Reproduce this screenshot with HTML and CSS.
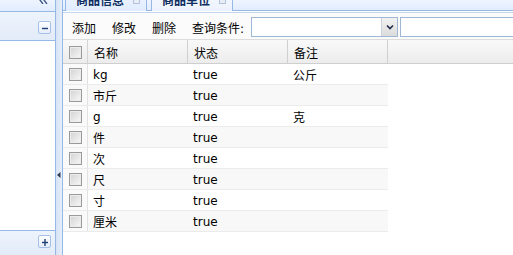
FILE: index.html
```html
<!DOCTYPE html>
<html lang="zh">
<head>
<meta charset="utf-8">
<title>商品单位</title>
<link rel="stylesheet" href="styles.css">
</head>
<body>
<div class="app">
  <aside class="west">
    <div class="west-title">
      <span class="tool-collapse">
        <svg width="10" height="10" viewBox="0 0 10 10"><polyline points="5,0 2,4 5,8" fill="none" stroke="#3d5a86" stroke-width="1.4"/><polyline points="9,0 6,4 9,8" fill="none" stroke="#3d5a86" stroke-width="1.4"/></svg>
      </span>
    </div>
    <div class="acc-header acc-top">
      <span class="acc-tool"><svg width="8" height="8" viewBox="0 0 8 8"><line x1="1" y1="4.5" x2="7" y2="4.5" stroke="#1d3f73" stroke-width="1.4"/></svg></span>
    </div>
    <div class="acc-body"></div>
    <div class="acc-header acc-bottom">
      <span class="acc-tool"><svg width="8" height="8" viewBox="0 0 8 8"><line x1="1" y1="4.5" x2="7" y2="4.5" stroke="#1d3f73" stroke-width="1.4"/><line x1="4" y1="1" x2="4" y2="8" stroke="#1d3f73" stroke-width="1.4"/></svg></span>
    </div>
  </aside>
  <div class="splitter">
    <svg class="split-arrow" width="4" height="6" viewBox="0 0 4 6"><polygon points="3.5,0 0,3 3.5,6" fill="#2a3a55"/></svg>
  </div>
  <main class="center">
    <div class="tabs">
      <div class="tab">商品信息<span class="tab-close"></span></div>
      <div class="tab tab-sel">商品单位<span class="tab-close"></span></div>
    </div>
    <div class="toolbar">
      <span class="tb-btn">添加</span>
      <span class="tb-btn">修改</span>
      <span class="tb-btn">删除</span>
      <span class="tb-label">查询条件:</span>
      <span class="combo">
        <span class="combo-text"></span>
        <span class="combo-arrow"><svg width="8" height="6" viewBox="0 0 8 6"><polyline points="1,1.5 4,4.5 7,1.5" fill="none" stroke="#1f2d4a" stroke-width="1.6"/></svg></span>
      </span>
      <span class="search-box"></span>
    </div>
    <div class="grid">
      <div class="grid-header">
        <div class="cell cell-ck"><span class="ck"></span></div>
        <div class="cell cell-col">名称</div>
        <div class="cell cell-col">状态</div>
        <div class="cell cell-col">备注</div>
        <div class="cell cell-fill"></div>
      </div>
      <div class="grid-body">
        <div class="row"><div class="cell cell-ck"><span class="ck"></span></div><div class="cell cell-col">kg</div><div class="cell cell-col">true</div><div class="cell cell-col">公斤</div></div>
        <div class="row row-alt"><div class="cell cell-ck"><span class="ck"></span></div><div class="cell cell-col">市斤</div><div class="cell cell-col">true</div><div class="cell cell-col"></div></div>
        <div class="row"><div class="cell cell-ck"><span class="ck"></span></div><div class="cell cell-col">g</div><div class="cell cell-col">true</div><div class="cell cell-col">克</div></div>
        <div class="row row-alt"><div class="cell cell-ck"><span class="ck"></span></div><div class="cell cell-col">件</div><div class="cell cell-col">true</div><div class="cell cell-col"></div></div>
        <div class="row"><div class="cell cell-ck"><span class="ck"></span></div><div class="cell cell-col">次</div><div class="cell cell-col">true</div><div class="cell cell-col"></div></div>
        <div class="row row-alt"><div class="cell cell-ck"><span class="ck"></span></div><div class="cell cell-col">尺</div><div class="cell cell-col">true</div><div class="cell cell-col"></div></div>
        <div class="row"><div class="cell cell-ck"><span class="ck"></span></div><div class="cell cell-col">寸</div><div class="cell cell-col">true</div><div class="cell cell-col"></div></div>
        <div class="row row-alt"><div class="cell cell-ck"><span class="ck"></span></div><div class="cell cell-col">厘米</div><div class="cell cell-col">true</div><div class="cell cell-col"></div></div>
      </div>
    </div>
  </main>
</div>
</body>
</html>
```
FILE: styles.css
```css
* { box-sizing: border-box; }
html, body {
  margin: 0;
  width: 513px;
  height: 255px;
  overflow: hidden;
  background: #fff;
}
body {
  font-family: "DejaVu Sans", "Noto Sans CJK SC", sans-serif;
  font-size: 12px;
  color: #000;
}
.app {
  display: flex;
  height: 255px;
}

/* west region */
.west {
  width: 56px;
  flex: none;
  display: flex;
  flex-direction: column;
  border-right: 1px solid #95b8e7;
  background: #fff;
}
.west-title {
  height: 12px;
  flex: none;
  border-bottom: 1px solid #95b8e7;
  background: linear-gradient(#eff5ff, #e0ecff);
  display: flex;
  justify-content: flex-end;
  align-items: flex-start;
  padding-right: 4px;
  overflow: hidden;
}
.tool-collapse {
  display: block;
  width: 11px;
  height: 4px;
  overflow: hidden;
  margin-right: 2px;
}
.tool-collapse svg {
  display: block;
  margin-top: -4px;
}
.acc-header {
  flex: none;
  display: flex;
  justify-content: flex-end;
  padding-right: 4px;
  background: linear-gradient(#eef4fd, #e2ebf8);
}
.acc-top {
  height: 29px;
  border-bottom: 1px solid #95b8e7;
  align-items: center;
  padding-top: 3px;
}
.acc-bottom {
  height: 25px;
  border-top: 1px solid #95b8e7;
  align-items: flex-start;
  padding-top: 4px;
}
.acc-tool {
  width: 13px;
  height: 13px;
  border: 1px solid #a7c0e6;
  border-radius: 2px;
  background: linear-gradient(#ffffff, #e4edf9);
  display: flex;
  align-items: center;
  justify-content: center;
}
.acc-tool svg { display: block; }
.acc-body {
  flex: 1;
  background: #fff;
}

/* splitter */
.splitter {
  width: 6px;
  flex: none;
  background: linear-gradient(90deg, #d7e3f4, #e6eefa);
  display: flex;
  align-items: flex-start;
  justify-content: flex-end;
  padding-top: 172px;
}
.split-arrow { display: block; margin-right: 1px; }

/* center region */
.center {
  flex: 1;
  min-width: 0;
  border-left: 1px solid #95b8e7;
  display: flex;
  flex-direction: column;
}
.tabs {
  height: 11px;
  flex: none;
  border-bottom: 1px solid #95b8e7;
  background: linear-gradient(#eff5ff, #e0ecff);
  display: flex;
  align-items: flex-end;
  gap: 4px;
  padding-left: 2px;
}
.tab {
  flex: none;
  height: 20px;
  line-height: 18px;
  margin-bottom: -1px;
  width: 82px;
  padding-left: 10px;
  border: 1px solid #95b8e7;
  border-bottom: 0;
  background: linear-gradient(#eff5ff, #e0ecff);
  font-weight: bold;
  color: #0e2d5f;
  position: relative;
}
.tab-sel {
  background: linear-gradient(#f6f9ff, #ecf2fc);
}
.tab-close {
  position: absolute;
  right: 6px;
  top: 5px;
  width: 7px;
  height: 7px;
  border: 1px solid #b3c3da;
  background: #e9eef6;
}

.toolbar {
  height: 28px;
  flex: none;
  margin-top: 1px;
  border-top: 1px solid #c5d6ef;
  border-bottom: 1px solid #dcdcdc;
  background: #fbfbfb;
  display: flex;
  align-items: center;
  padding-left: 1px;
  padding-top: 1px;
  white-space: nowrap;
}
.tb-btn {
  padding: 4px 8px 0;
  line-height: 20px;
}
.tb-label {
  padding: 4px 0 0 8px;
  margin-right: 7px;
  line-height: 20px;
}
.combo {
  flex: none;
  display: flex;
  width: 147px;
  height: 20px;
  border: 1px solid #9fb7d6;
  background: #fff;
}
.combo-text { flex: 1; }
.combo-arrow {
  width: 16px;
  border-left: 1px solid #c9d3df;
  background: linear-gradient(#f2f2f2, #dcdcdc);
  display: flex;
  align-items: center;
  justify-content: center;
}
.combo-arrow svg { display: block; }
.search-box {
  flex: none;
  width: 130px;
  height: 20px;
  margin-left: 2px;
  border: 1px solid #9fb7d6;
  background: #fff;
}

/* grid */
.grid {
  flex: 1;
  display: flex;
  flex-direction: column;
}
.grid-header {
  height: 24px;
  flex: none;
  display: flex;
  border-bottom: 1px solid #cfcfcf;
  background: linear-gradient(#f9f9f9, #ececec);
}
.cell {
  display: flex;
  align-items: center;
  white-space: nowrap;
}
.cell-ck {
  width: 25px;
  flex: none;
  justify-content: center;
  border-right: 1px solid #d4d4d4;
}
.cell-col {
  width: 100px;
  flex: none;
  padding-left: 5px;
}
.grid-header .cell-col {
  border-right: 1px solid #cfcfcf;
  padding-left: 6px;
  padding-top: 2px;
}
.grid-header .cell-ck { padding-top: 2px; }
.cell-fill { flex: 1; }
.ck {
  display: block;
  width: 13px;
  height: 13px;
  border: 1px solid #9a9a9a;
  background: linear-gradient(135deg, #d2d2d2, #f8f8f8);
  box-shadow: inset 0 0 0 1px #ececec;
}
.grid-body {
  width: 325px;
}
.row {
  display: flex;
  height: 21px;
  border-bottom: 1px solid #ebebeb;
  background: #fff;
}
.row .cell-col { padding-top: 1px; }
.row-alt { background: #f8f8f8; }
.row .cell-ck {
  border-right-color: #e2e2e2;
  background: #fafafa;
}
```
